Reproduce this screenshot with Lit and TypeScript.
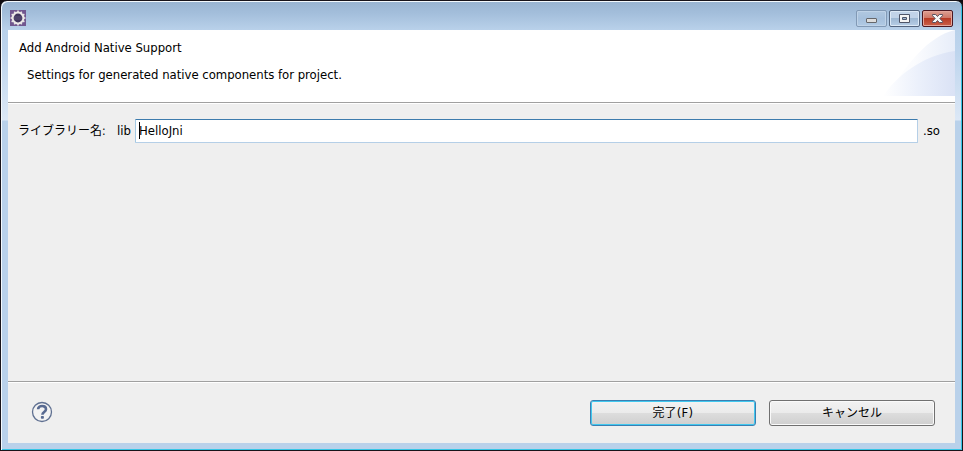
import { LitElement, html, css, svg } from "lit";
import { customElement } from "lit/decorators.js";

const teeth = Array.from({ length: 12 }, (_, i) => i * 30);

@customElement("app-root")
export class AppRoot extends LitElement {
  static styles = css`
    :host { display: block; width: 963px; height: 451px; overflow: hidden; background: #100c10;
      font: 13px/18px "DejaVu Sans Condensed", "DejaVu Sans", "Noto Sans CJK JP", sans-serif; font-stretch: condensed; color: #000; }
    * { box-sizing: border-box; }
    .window { height: 451px; padding: 0 6px 6px; border: 1px solid #18141a; border-radius: 7px 7px 0 0;
      box-shadow: inset 1px 1px #f4f9fd, inset -1px -1px #35c5e5; display: flex; flex-direction: column;
      background: linear-gradient(#99b4d1 0, #a3bedb 12px, #b9d1ea 29px, #bdd4ed 50px, #dce8f6 119px, #b9d1ea 120px, #b9d1ea 100%); }
    .title { height: 29px; flex: none; display: flex; align-items: flex-start; padding: 9px 3px 0 3px; }
    .app { width: 16px; height: 16px; display: block; }
    .controls { display: flex; gap: 2px; margin-left: auto; }
    .control { width: 31px; height: 17px; border: 1px solid #53657f; border-radius: 2px; box-shadow: inset 0 0 0 1px #dce9f6;
      background: linear-gradient(#c1d3e8 0 45%, #9eb8d3 50%, #b8cee6); }
    .control.min { border-color: #8199b5; box-shadow: inset 0 0 0 1px #bfd3e8; background: linear-gradient(#b1c8e0, #a6c0dc 50%, #b1cae5); }
    .control.close { border-color: #4b1720; box-shadow: inset 0 0 0 1px #e4a69b; background: linear-gradient(#dda093 0, #cf7868 45%, #b83b25 50%, #ca6049); }
    .control svg { width: 29px; height: 15px; display: block; }
    .client { flex: 1; margin: 0 1px 1px; background: #efefef; display: flex; flex-direction: column; }
    .header { height: 73px; flex: none; background: #fff; border-bottom: 1px solid #a0a0a0; display: flex; justify-content: space-between; }
    .copy { padding: 9px 0 0 11px; }
    .heading, .message { white-space: nowrap; }
    .heading { letter-spacing: -.02px; }
    .message { margin: 9px 0 0 8px; letter-spacing: -.02px; }
    .art { width: 72px; height: 66px; display: block; }
    .body { flex: 1; border-top: 1px solid #fff; padding: 15px 15px 0 10px; display: flex; align-items: flex-start; }
    .body span { line-height: 24px; white-space: nowrap; }
    .label { width: 99px; font-size: 12px; }
    .lib { width: 18px; }
    .field { width: 783px; height: 24px; border: 1px solid #b5cfe7; border-top-color: #3d7bad; border-left-color: #a4c9e3; border-radius: 1px;
      background: #fff; padding: 2px 0 0 3px; display: flex; }
    .caret { width: 1px; height: 17px; background: #000; }
    .body .value { line-height: 18px; margin-left: -1px; }
    .so { margin-left: 5px; }
    .footer { height: 62px; flex: none; border-top: 1px solid #a0a0a0; box-shadow: inset 0 1px #fff; padding: 18px 20px 0 23px; display: flex; }
    .help { width: 22px; height: 22px; margin-top: 1px; display: block; }
    .buttons { display: flex; gap: 13px; margin-left: auto; }
    button { width: 166px; height: 26px; padding: 0; border: 1px solid #707070; border-radius: 3px; font: inherit; font-size: 12px; color: #000;
      background: linear-gradient(#f2f2f2, #ebebeb 48%, #dddddd 50%, #cfcfcf); box-shadow: inset 0 0 0 1px #fafafa; }
    .primary { border-color: #3c7fb1; box-shadow: inset 0 0 0 1px #41c8ef; }
    .key { font-size: 13px; letter-spacing: .3px; }
  `;

  render() {
    return html`
      <div class="window">
        <div class="title">
          <svg class="app" viewBox="0 0 16 16">
            <rect width="16" height="16" fill="#71578f"/>
            <circle cx="8" cy="8" r="5.4" fill="#40345c" stroke="#eeeae8" stroke-width="2"/>
            ${teeth.map((a) => svg`<path d="M7.2 .6h1.6v2H7.2z" fill="#e8e6e4" transform="rotate(${a} 8 8)"/>`)}
            <path d="M4 7h8M4 9h8" stroke="#6c6385" stroke-width=".7"/>
          </svg>
          <div class="controls">
            <div class="control min"><svg viewBox="0 0 29 15"><rect x="9.5" y="7.5" width="10" height="4" rx=".5" fill="#ddd" stroke="#65676b"/></svg></div>
            <div class="control"><svg viewBox="0 0 29 15"><path fill-rule="evenodd" d="M9.5 3.5h10v8h-10zM12.5 6.5h4v2h-4z" fill="#f4f4f4" stroke="#4e5568"/></svg></div>
            <div class="control close"><svg viewBox="0 0 29 15"><path d="M9.5 3.5h3.2l1.8 2 1.8-2h3.2v1.2l-2.7 2.8 2.7 2.8v1.2h-3.2l-1.8-2-1.8 2H9.5v-1.2l2.7-2.8-2.7-2.8z" fill="#f7f7f7" stroke="#5a5260"/></svg></div>
          </div>
        </div>
        <div class="client">
          <div class="header">
            <div class="copy"><div class="heading">Add Android Native Support</div><div class="message">Settings for generated native components for project.</div></div>
            <svg class="art" viewBox="0 0 72 66">
              <defs>
                <linearGradient id="outer"><stop offset="0" stop-color="#fff"/><stop offset=".4" stop-color="#fbfcfe"/><stop offset="1" stop-color="#e7edf9"/></linearGradient>
                <linearGradient id="inner"><stop offset="0" stop-color="#fff"/><stop offset=".5" stop-color="#ebf0fb"/><stop offset="1" stop-color="#dae2f5"/></linearGradient>
              </defs>
              <path d="M4 66C22 36 45 6 72 0v66z" fill="url(#outer)"/>
              <path d="M0 66C14 46 38 26 72 21v45z" fill="url(#inner)"/>
            </svg>
          </div>
          <div class="body">
            <span class="label">ライブラリー名:</span><span class="lib">lib</span>
            <div class="field"><div class="caret"></div><span class="value">HelloJni</span></div>
            <span class="so">.so</span>
          </div>
          <div class="footer">
            <svg class="help" viewBox="0 0 22 22">
              <circle cx="11" cy="11" r="9.5" fill="#f3f3f3" stroke="#5f7091" stroke-width="1.3"/>
              <path d="M7.1 8.2C7.1 4 15 4 15 8.2c0 2.8-3.6 2.8-3.6 5.5" fill="none" stroke="#586a91" stroke-width="2.6"/><rect x="9.9" y="15" width="3" height="2.8" rx=".8" fill="#586a91"/>
            </svg>
            <div class="buttons"><button class="primary">完了<span class="key">(F)</span></button><button>キャンセル</button></div>
          </div>
        </div>
      </div>`;
  }
}
